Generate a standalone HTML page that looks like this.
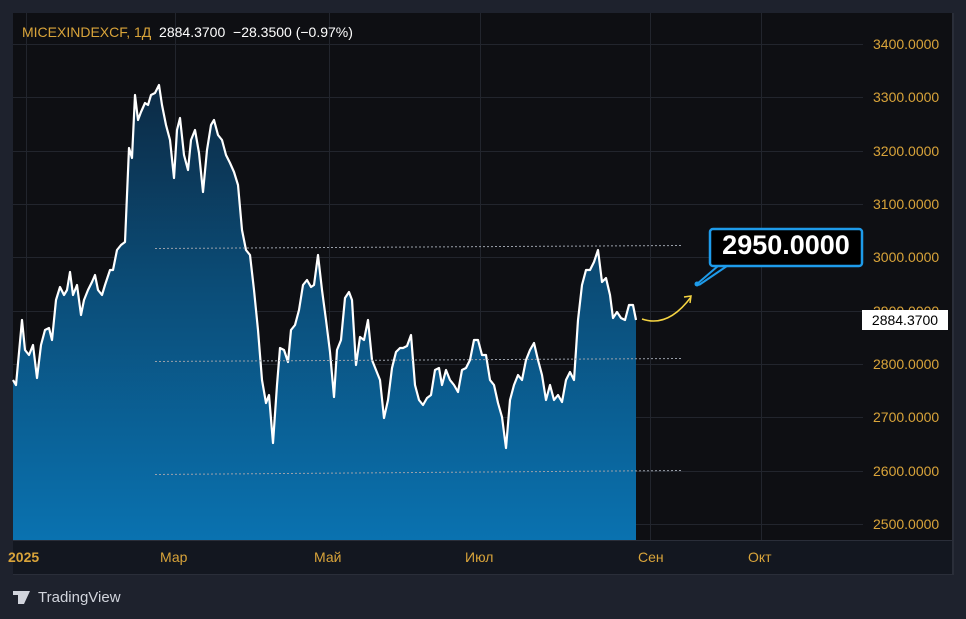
<!DOCTYPE html>
<html><head><meta charset="utf-8"><style>
body{margin:0;width:966px;height:619px;background:#1e222d;overflow:hidden;font-family:"Liberation Sans","DejaVu Sans",sans-serif;position:relative}
.t{position:absolute;white-space:nowrap}
</style></head><body>
<svg width="966" height="619" style="position:absolute;left:0;top:0">
<defs><linearGradient id="g" x1="0" y1="0" x2="0" y2="1"><stop offset="0" stop-color="#0c2a44"/><stop offset="0.45" stop-color="#0b4d78"/><stop offset="1" stop-color="#0a72b0"/></linearGradient></defs>
<rect x="13" y="13" width="940" height="562" fill="#0e0f13"/>
<rect x="13" y="540" width="940" height="35" fill="#131720"/>
<line x1="13" y1="540.5" x2="953" y2="540.5" stroke="#2a2e39"/>
<rect x="952" y="13" width="2" height="562" fill="#2a2e39"/>
<rect x="13" y="574" width="940" height="1" fill="#2a2e39"/>
<g stroke="#22252d" stroke-width="1">
<line x1="13" y1="44.5" x2="863" y2="44.5"/><line x1="13" y1="97.5" x2="863" y2="97.5"/><line x1="13" y1="151.5" x2="863" y2="151.5"/><line x1="13" y1="204.5" x2="863" y2="204.5"/><line x1="13" y1="257.5" x2="863" y2="257.5"/><line x1="13" y1="311.5" x2="863" y2="311.5"/><line x1="13" y1="364.5" x2="863" y2="364.5"/><line x1="13" y1="417.5" x2="863" y2="417.5"/><line x1="13" y1="471.5" x2="863" y2="471.5"/><line x1="13" y1="524.5" x2="863" y2="524.5"/>
<line x1="26.5" y1="13" x2="26.5" y2="540"/><line x1="175.5" y1="13" x2="175.5" y2="540"/><line x1="329.5" y1="13" x2="329.5" y2="540"/><line x1="480.5" y1="13" x2="480.5" y2="540"/><line x1="650.5" y1="13" x2="650.5" y2="540"/><line x1="761.5" y1="13" x2="761.5" y2="540"/>
</g>
<polygon fill="url(#g)" points="13,540 13,380 16,385 22,320 25,350 29,355 33,345 37,378 41,345 45,330 49,328 52,340 56,300 60,287 64,295 67,290 70,272 73,295 77,285 81,315 84,300 88,290 92,282 95,275 98,290 102,295 105,285 110,270 113,270 117,250 121,245 125,242 129,148 132,158 135,95 138,120 141,112 145,103 148,105 151,95 155,93 159,85 162,105 166,125 170,140 174,178 177,130 180,118 184,155 188,170 191,140 195,130 199,153 203,192 207,150 211,125 214,120 218,135 222,140 226,155 230,163 234,172 238,185 242,230 246,250 250,255 254,290 258,330 262,380 266,403 269,395 273,443 277,385 280,348 284,350 288,362 291,330 295,325 299,310 303,285 307,280 311,287 314,285 318,255 322,290 326,320 330,352 334,397 337,350 341,340 345,298 349,292 352,300 356,365 360,337 364,340 368,320 372,360 376,370 380,380 384,418 388,400 392,368 396,352 400,348 403,348 407,346 411,335 415,385 419,400 423,405 427,398 431,395 435,370 439,368 442,385 446,370 450,380 454,385 458,392 462,370 466,368 470,360 474,340 478,340 482,355 486,355 490,380 494,385 498,403 502,417 506,448 510,400 514,385 518,375 522,380 526,360 530,350 534,343 538,360 542,375 546,400 550,385 554,400 558,395 562,402 566,380 570,372 574,380 578,320 582,285 586,270 590,270 594,262 598,250 602,282 606,278 610,295 613,318 617,312 621,318 625,320 629,305 633,305 636,320 636,540"/>
<polyline fill="none" stroke="#fff" stroke-width="2.2" stroke-linejoin="round" points="13,380 16,385 22,320 25,350 29,355 33,345 37,378 41,345 45,330 49,328 52,340 56,300 60,287 64,295 67,290 70,272 73,295 77,285 81,315 84,300 88,290 92,282 95,275 98,290 102,295 105,285 110,270 113,270 117,250 121,245 125,242 129,148 132,158 135,95 138,120 141,112 145,103 148,105 151,95 155,93 159,85 162,105 166,125 170,140 174,178 177,130 180,118 184,155 188,170 191,140 195,130 199,153 203,192 207,150 211,125 214,120 218,135 222,140 226,155 230,163 234,172 238,185 242,230 246,250 250,255 254,290 258,330 262,380 266,403 269,395 273,443 277,385 280,348 284,350 288,362 291,330 295,325 299,310 303,285 307,280 311,287 314,285 318,255 322,290 326,320 330,352 334,397 337,350 341,340 345,298 349,292 352,300 356,365 360,337 364,340 368,320 372,360 376,370 380,380 384,418 388,400 392,368 396,352 400,348 403,348 407,346 411,335 415,385 419,400 423,405 427,398 431,395 435,370 439,368 442,385 446,370 450,380 454,385 458,392 462,370 466,368 470,360 474,340 478,340 482,355 486,355 490,380 494,385 498,403 502,417 506,448 510,400 514,385 518,375 522,380 526,360 530,350 534,343 538,360 542,375 546,400 550,385 554,400 558,395 562,402 566,380 570,372 574,380 578,320 582,285 586,270 590,270 594,262 598,250 602,282 606,278 610,295 613,318 617,312 621,318 625,320 629,305 633,305 636,320"/>
<g stroke="#9aa0aa" stroke-width="1" stroke-dasharray="2,2">
<line x1="155" y1="248.5" x2="681" y2="245.5"/><line x1="155" y1="361.5" x2="681" y2="358.5"/><line x1="155" y1="474.5" x2="681" y2="470.5"/>
</g>
<path d="M642,319 Q668,328 691,297" fill="none" stroke="#f5d442" stroke-width="1.5"/>
<path d="M684,297 L691,296 L690,303" fill="none" stroke="#f5d442" stroke-width="1.5"/>
<path d="M697,284 L718,266 L727,266 L699,285" fill="none" stroke="#1e9bea" stroke-width="2"/>
<circle cx="697" cy="284" r="2.5" fill="#1e9bea"/>
<rect x="710" y="229" width="152" height="37" rx="3" fill="#000" stroke="#1e9bea" stroke-width="2.5"/>
<path d="M13,591 h9 v13 h-4 v-9 h-5 z M22,591 h8 l-6,13 h-4 z" fill="#d1d4dc"/>
<circle cx="25" cy="593" r="0" fill="#d1d4dc"/>
</svg>
<div class="t" style="left:22px;top:24px;font-size:14px;color:#d9a43a">MICEXINDEXCF, 1Д <span style="color:#fff">&nbsp;2884.3700 &nbsp;−28.3500 (−0.97%)</span></div>
<div class="t" style="left:710px;top:230px;width:152px;text-align:center;font-size:27px;font-weight:bold;color:#fff">2950.0000</div>
<div style="position:absolute;left:873px;top:0;font-size:14px;color:#d9a43a;line-height:1">
<div class="t" style="top:37px">3400.0000</div><div class="t" style="top:90px">3300.0000</div><div class="t" style="top:144px">3200.0000</div><div class="t" style="top:197px">3100.0000</div><div class="t" style="top:250px">3000.0000</div><div class="t" style="top:304px">2900.0000</div><div class="t" style="top:357px">2800.0000</div><div class="t" style="top:410px">2700.0000</div><div class="t" style="top:464px">2600.0000</div><div class="t" style="top:517px">2500.0000</div></div>
<div class="t" style="left:862px;top:310px;width:86px;height:20px;background:#fff;color:#000;font-size:14px;line-height:20px;text-align:center">2884.3700</div>
<div style="font-size:14px;color:#d9a43a">
<div class="t" style="left:8px;top:549px;font-weight:bold">2025</div><div class="t" style="left:160px;top:549px">Мар</div><div class="t" style="left:314px;top:549px">Май</div><div class="t" style="left:465px;top:549px">Июл</div><div class="t" style="left:638px;top:549px">Сен</div><div class="t" style="left:748px;top:549px">Окт</div></div>
<div class="t" style="left:38px;top:589px;font-size:15px;color:#d1d4dc">TradingView</div>
</body></html>
